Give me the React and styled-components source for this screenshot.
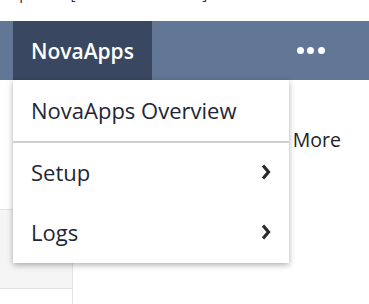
import styled, { createGlobalStyle } from 'styled-components'

const GlobalStyle = createGlobalStyle`
  html, body {
    margin: 0;
    padding: 0;
    background: #ffffff;
    font-family: 'Open Sans', 'Noto Sans', sans-serif;
  }
`

const Page = styled.div`
  width: 369px;
  height: 304px;
  overflow: hidden;
  position: relative;
`

// the strip above the nav only shows the tails of a scrolled-off line
const TopStrip = styled.div`
  height: 21px;
  overflow: hidden;
`

const Crumb = styled.div`
  display: flex;
  margin: -17px 0 0 15px;
  font-size: 15px;
  line-height: 20px;
  color: #2b3345;
  white-space: nowrap;
`

const CrumbLabel = styled.span`
  margin-left: ${({ gap }) => gap || 0}px;
`

const NavBar = styled.nav`
  position: relative;
  display: flex;
  align-items: stretch;
  height: 59px;
  background: #627796;
  z-index: 2;
`

const NavTab = styled.div`
  display: flex;
  align-items: center;
  margin-left: 13px;
  padding: 0 18px;
  width: 103px;
  background: ${({ active }) => (active ? '#3a4760' : 'transparent')};
  color: #ffffff;
  font-size: 21px;
  font-weight: 600;
`

const Spacer = styled.div`
  flex: 1;
`

const DotsButton = styled.button`
  display: flex;
  align-items: center;
  gap: 3.6px;
  margin-right: 44px;
  padding: 0;
  border: 0;
  background: transparent;
  cursor: pointer;
`

const Dot = styled.span`
  width: 7px;
  height: 7px;
  border-radius: 50%;
  background: #ffffff;
`

const Dropdown = styled.ul`
  position: absolute;
  top: 100%;
  left: 13px;
  width: 276px;
  margin: 0;
  padding: 0;
  list-style: none;
  background: #ffffff;
  box-shadow: 0 2px 6px rgba(0, 0, 0, 0.32);
`

const MenuItem = styled.li`
  display: flex;
  align-items: center;
  justify-content: space-between;
  box-sizing: border-box;
  height: ${({ first }) => (first ? '63px' : '60px')};
  padding: 0 18px 2px;
  font-size: 22px;
  color: #1e2636;
  border-bottom: ${({ divided }) => (divided ? '2px solid #cfcfcf' : '0')};
  cursor: pointer;
`

const Chevron = () => (
  <svg width="10" height="18" viewBox="0 0 10 18">
    <path d="M2 2.5 L7.5 9 L2 15.5" fill="none" stroke="#2a2a2a" strokeWidth="3.2" />
  </svg>
)

const Content = styled.main`
  display: flex;
  flex-direction: column;
`

const MoreRow = styled.div`
  display: flex;
  justify-content: flex-end;
  margin-top: 46px;
  padding-right: 28px;
  font-size: 19.5px;
  line-height: 27px;
  color: #222222;
`

const Sidebar = styled.aside`
  margin-top: 56px;
  width: 72px;
  border-top: 1px solid #e3e3e3;
  border-right: 1px solid #e3e3e3;
`

const SideCell = styled.div`
  height: ${({ tall }) => (tall ? '78px' : '40px')};
  background: ${({ shaded }) => (shaded ? '#f5f5f5' : '#ffffff')};
  border-bottom: ${({ shaded }) => (shaded ? '1px solid #e3e3e3' : '0')};
`

export default function App() {
  return (
    <Page>
      <GlobalStyle />
      <TopStrip>
        <Crumb>
          <CrumbLabel>Ip</CrumbLabel>
          <CrumbLabel gap={42}>[ Nova Main Menu ]</CrumbLabel>
        </Crumb>
      </TopStrip>

      <NavBar>
        <NavTab active>NovaApps</NavTab>
        <Spacer />
        <DotsButton aria-label="More">
          <Dot />
          <Dot />
          <Dot />
        </DotsButton>

        <Dropdown>
          <MenuItem first divided>NovaApps Overview</MenuItem>
          <MenuItem>
            Setup
            <Chevron />
          </MenuItem>
          <MenuItem>
            Logs
            <Chevron />
          </MenuItem>
        </Dropdown>
      </NavBar>

      <Content>
        <MoreRow>More</MoreRow>
        <Sidebar>
          <SideCell shaded tall />
          <SideCell />
        </Sidebar>
      </Content>
    </Page>
  )
}
